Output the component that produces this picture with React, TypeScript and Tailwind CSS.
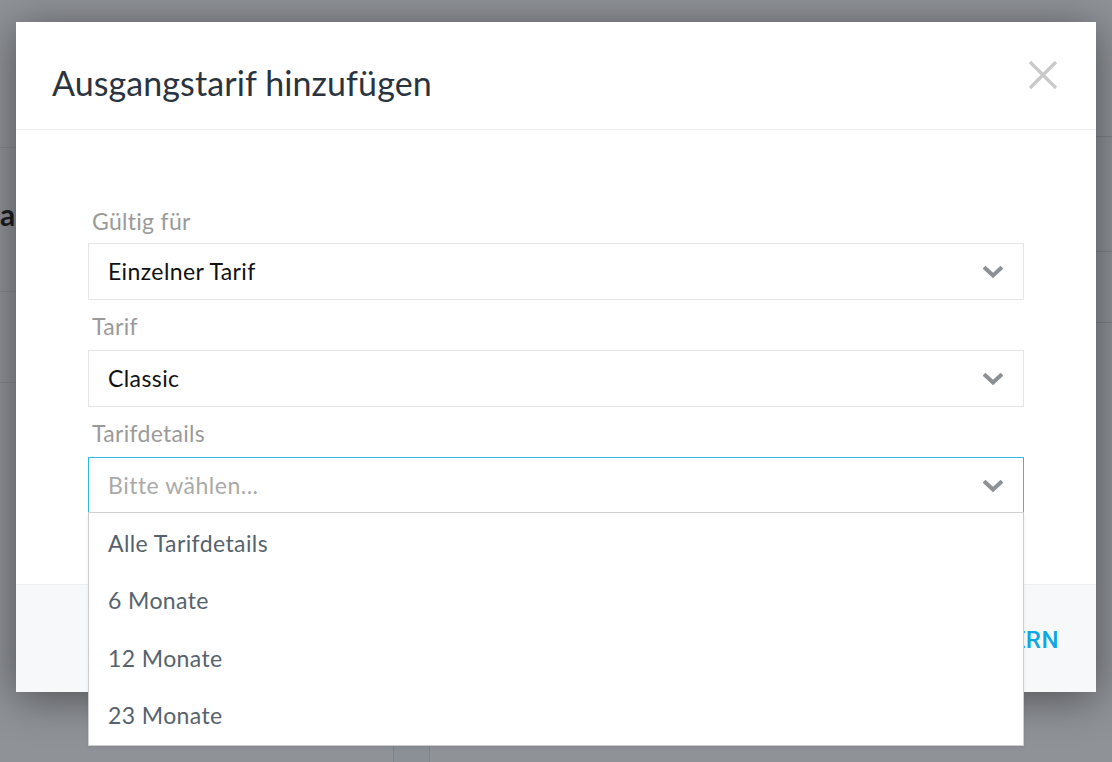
import React from "react";

const Chevron = () => (
  <svg width="20" height="14" viewBox="0 0 20 14" className="shrink-0">
    <path d="M2.5 3.5 L10 10.5 L17.5 3.5" fill="none" stroke="#8c9196" strokeWidth="4" strokeLinecap="square" strokeLinejoin="miter" />
  </svg>
);

const Select = ({ value, placeholder, active }: { value?: string; placeholder?: string; active?: boolean }) => (
  <div
    className={`h-[57px] flex items-center justify-between pl-[19px] pr-[20px] bg-white border ${
      active ? "border-[#2cbbe6]" : "border-[#e5e5e5]"
    }`}
  >
    {value ? (
      <span className="text-[23px] tracking-[0.4px] text-[#111111]">{value}</span>
    ) : (
      <span className="text-[23px] tracking-[0.5px] text-[#a9a9a9]">{placeholder}</span>
    )}
    <Chevron />
  </div>
);

const Label = ({ children, first }: { children: React.ReactNode; first?: boolean }) => (
  <div
    className={`h-[30px] leading-[30px] text-[23px] tracking-[0.3px] text-[#9a9a9a] pl-[4px] ${
      first ? "mb-[7px]" : "mt-[11px] mb-[9px]"
    }`}
  >
    {children}
  </div>
);

export default function App() {
  const font = { fontFamily: '"Source Sans Pro", Lato, "Noto Sans", sans-serif' };
  return (
    <div className="relative w-[1112px] h-[762px] overflow-hidden bg-[#8f9297]" style={font}>
      {/* underlying page (dimmed) */}
      <div className="flex w-full h-full">
        <div className="w-[393px] flex flex-col">
          <div className="h-[148px] border-b border-[#85888d]" />
          <div className="h-[144px] border-b border-[#85888d] flex items-center">
            <span className="text-[30px] leading-[30px] font-bold text-[#1c1d1f] -mt-[12px]">a</span>
          </div>
          <div className="h-[91px] border-b border-[#85888d]" />
          <div className="flex-1" />
        </div>
        <div className="flex-1 flex flex-col">
          <div className="h-[137px] border-b border-[#7f8287]" />
          <div className="h-[115px] border-b border-[#7f8287]" />
          <div className="h-[71px] border-b border-[#7f8287]" />
          <div className="flex-1" />
          <div className="h-[17px] w-[37px] border-l border-r border-[#80838a] bg-[#8b8f96]" />
        </div>
      </div>

      {/* modal */}
      <div className="absolute left-[16px] top-[22px] w-[1080px] h-[670px] bg-white flex flex-col shadow-[0_6px_40px_rgba(0,0,0,0.45)]">
        <div className="h-[108px] shrink-0 border-b border-[#eeeeee] flex items-center justify-between pl-[36px] pr-[38px]">
          <h1 className="text-[34px] tracking-[0.1px] text-[#2a3440] font-normal mt-[14px]">Ausgangstarif hinzufügen</h1>
          <svg width="30" height="30" viewBox="0 0 30 30" className="mt-[-2px]">
            <path d="M2 2 L28 28 M28 2 L2 28" stroke="#c9c9c9" strokeWidth="3.2" />
          </svg>
        </div>
        <div className="flex-1 pt-[76px] px-[72px]">
          <Label first>Gültig für</Label>
          <Select value="Einzelner Tarif" />
          <Label>Tarif</Label>
          <Select value="Classic" />
          <Label>Tarifdetails</Label>
          <Select placeholder="Bitte wählen..." active />
        </div>
        <div className="h-[108px] shrink-0 bg-[#f7f8fa] border-t border-[#eeeeee] flex items-center justify-end pr-[37px]">
          <span className="text-[24px] font-medium tracking-[0.5px] text-[#0fa7df] mt-[2px]" style={{ fontFamily: "Roboto, sans-serif" }}>
            SPEICHERN
          </span>
        </div>
      </div>

      {/* dropdown menu */}
      <div className="absolute left-[88px] top-[512px] w-[936px] h-[234px] bg-white border border-[#cccccc] border-t-[#d0d0d0] flex flex-col py-[1px] shadow-[0_2px_4px_rgba(0,0,0,0.06)]">
        {["Alle Tarifdetails", "6 Monate", "12 Monate", "23 Monate"].map((t) => (
          <div key={t} className="flex-1 flex items-center pl-[19px] text-[23px] tracking-[0.4px] text-[#56636e]">
            {t}
          </div>
        ))}
      </div>
    </div>
  );
}
